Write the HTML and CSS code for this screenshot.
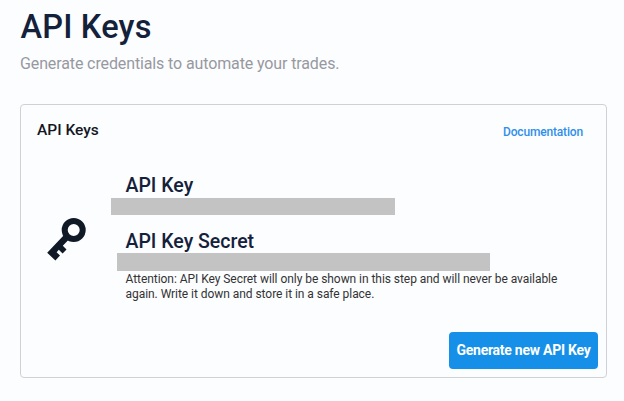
FILE: index.html
```html
<!DOCTYPE html>
<html lang="en">
<head>
<meta charset="utf-8">
<title>API Keys</title>
<link rel="stylesheet" href="styles.css">
</head>
<body>
<main class="page">
  <h1 class="title">API Keys</h1>
  <p class="subtitle">Generate credentials to automate your trades.</p>
  <section class="card">
    <header class="card-header">
      <h2 class="card-title">API Keys</h2>
      <a class="doc-link">Documentation</a>
    </header>
    <div class="card-body">
      <svg class="key-icon" viewBox="0 0 40 44" aria-hidden="true">
        <circle cx="26.7" cy="12" r="9" fill="none" stroke="currentColor" stroke-width="6"/>
        <path fill="currentColor" d="M17.5 16.5 22.3 20.9 15.8 27.8 19.5 31.4 15.6 35.4 11.8 31.8 9.6 34.2 13 37.4 8.4 42.4 .2 34.8Z"/>
      </svg>
      <div class="details">
        <h3 class="label">API Key</h3>
        <div class="mask mask-key"></div>
        <h3 class="label">API Key Secret</h3>
        <div class="mask mask-secret"></div>
        <p class="note">Attention: API Key Secret will only be shown in this step and will never be available again. Write it down and store it in a safe place.</p>
      </div>
    </div>
    <footer class="card-footer">
      <button class="button">Generate new API Key</button>
    </footer>
  </section>
</main>
</body>
</html>
```
FILE: styles.css
```css
* { box-sizing: border-box; }
body {
  margin: 0;
  height: 401px;
  overflow: hidden;
  background: #fcfdff;
  color: #14213a;
  font-family: Roboto, "Liberation Sans", sans-serif;
}
h1, h2, h3, p { margin: 0; font-weight: 500; }
.page { padding: 7px 17px 0 20px; }
.title { padding-left: .5px; font-size: 32.5px; line-height: 41px; letter-spacing: .2px; }
.subtitle {
  margin-top: 6px;
  font-size: 16px;
  line-height: 20px;
  font-weight: 400;
  letter-spacing: -.12px;
  color: #97999f;
}
.card {
  display: flex;
  flex-direction: column;
  height: 274px;
  margin-top: 30px;
  border: 1px solid #cfd1d4;
  border-radius: 4px;
}
.card-header {
  display: flex;
  justify-content: space-between;
  padding: 14px 23px 0 16px;
}
.card-title { font-size: 15.5px; line-height: 22px; color: #14171f; }
.doc-link { padding-top: 3px; font-size: 12px; line-height: 20px; font-weight: 500; letter-spacing: -.17px; color: #2f8fea; }
.card-body { display: flex; padding: 32px 30px 0 26px; }
.key-icon { width: 40px; height: 44px; margin-top: 44px; color: #101926; }
.details { padding-left: 38.5px; }
.label { font-size: 19.5px; line-height: 24px; }
.mask { background: #c3c3c3; }
.mask-key { width: 284px; height: 17px; margin: 0 0 15px -14.5px; }
.mask-secret { width: 373px; height: 18px; margin: -1px 0 0 -8.5px; }
.note { width: 440px; font-size: 12px; line-height: 15px; font-weight: 400; letter-spacing: -.05px; color: #333; padding-top: 1px; }
.card-footer { display: flex; justify-content: flex-end; margin-top: auto; padding: 0 8px 8px; }
.button {
  width: 149px;
  height: 37px;
  padding: 0;
  border: 0;
  border-radius: 4px;
  background: #168fe9;
  color: #fff;
  font: 700 14px/37px Roboto, "Liberation Sans", sans-serif;
  letter-spacing: -.25px;
  white-space: nowrap;
}
```
